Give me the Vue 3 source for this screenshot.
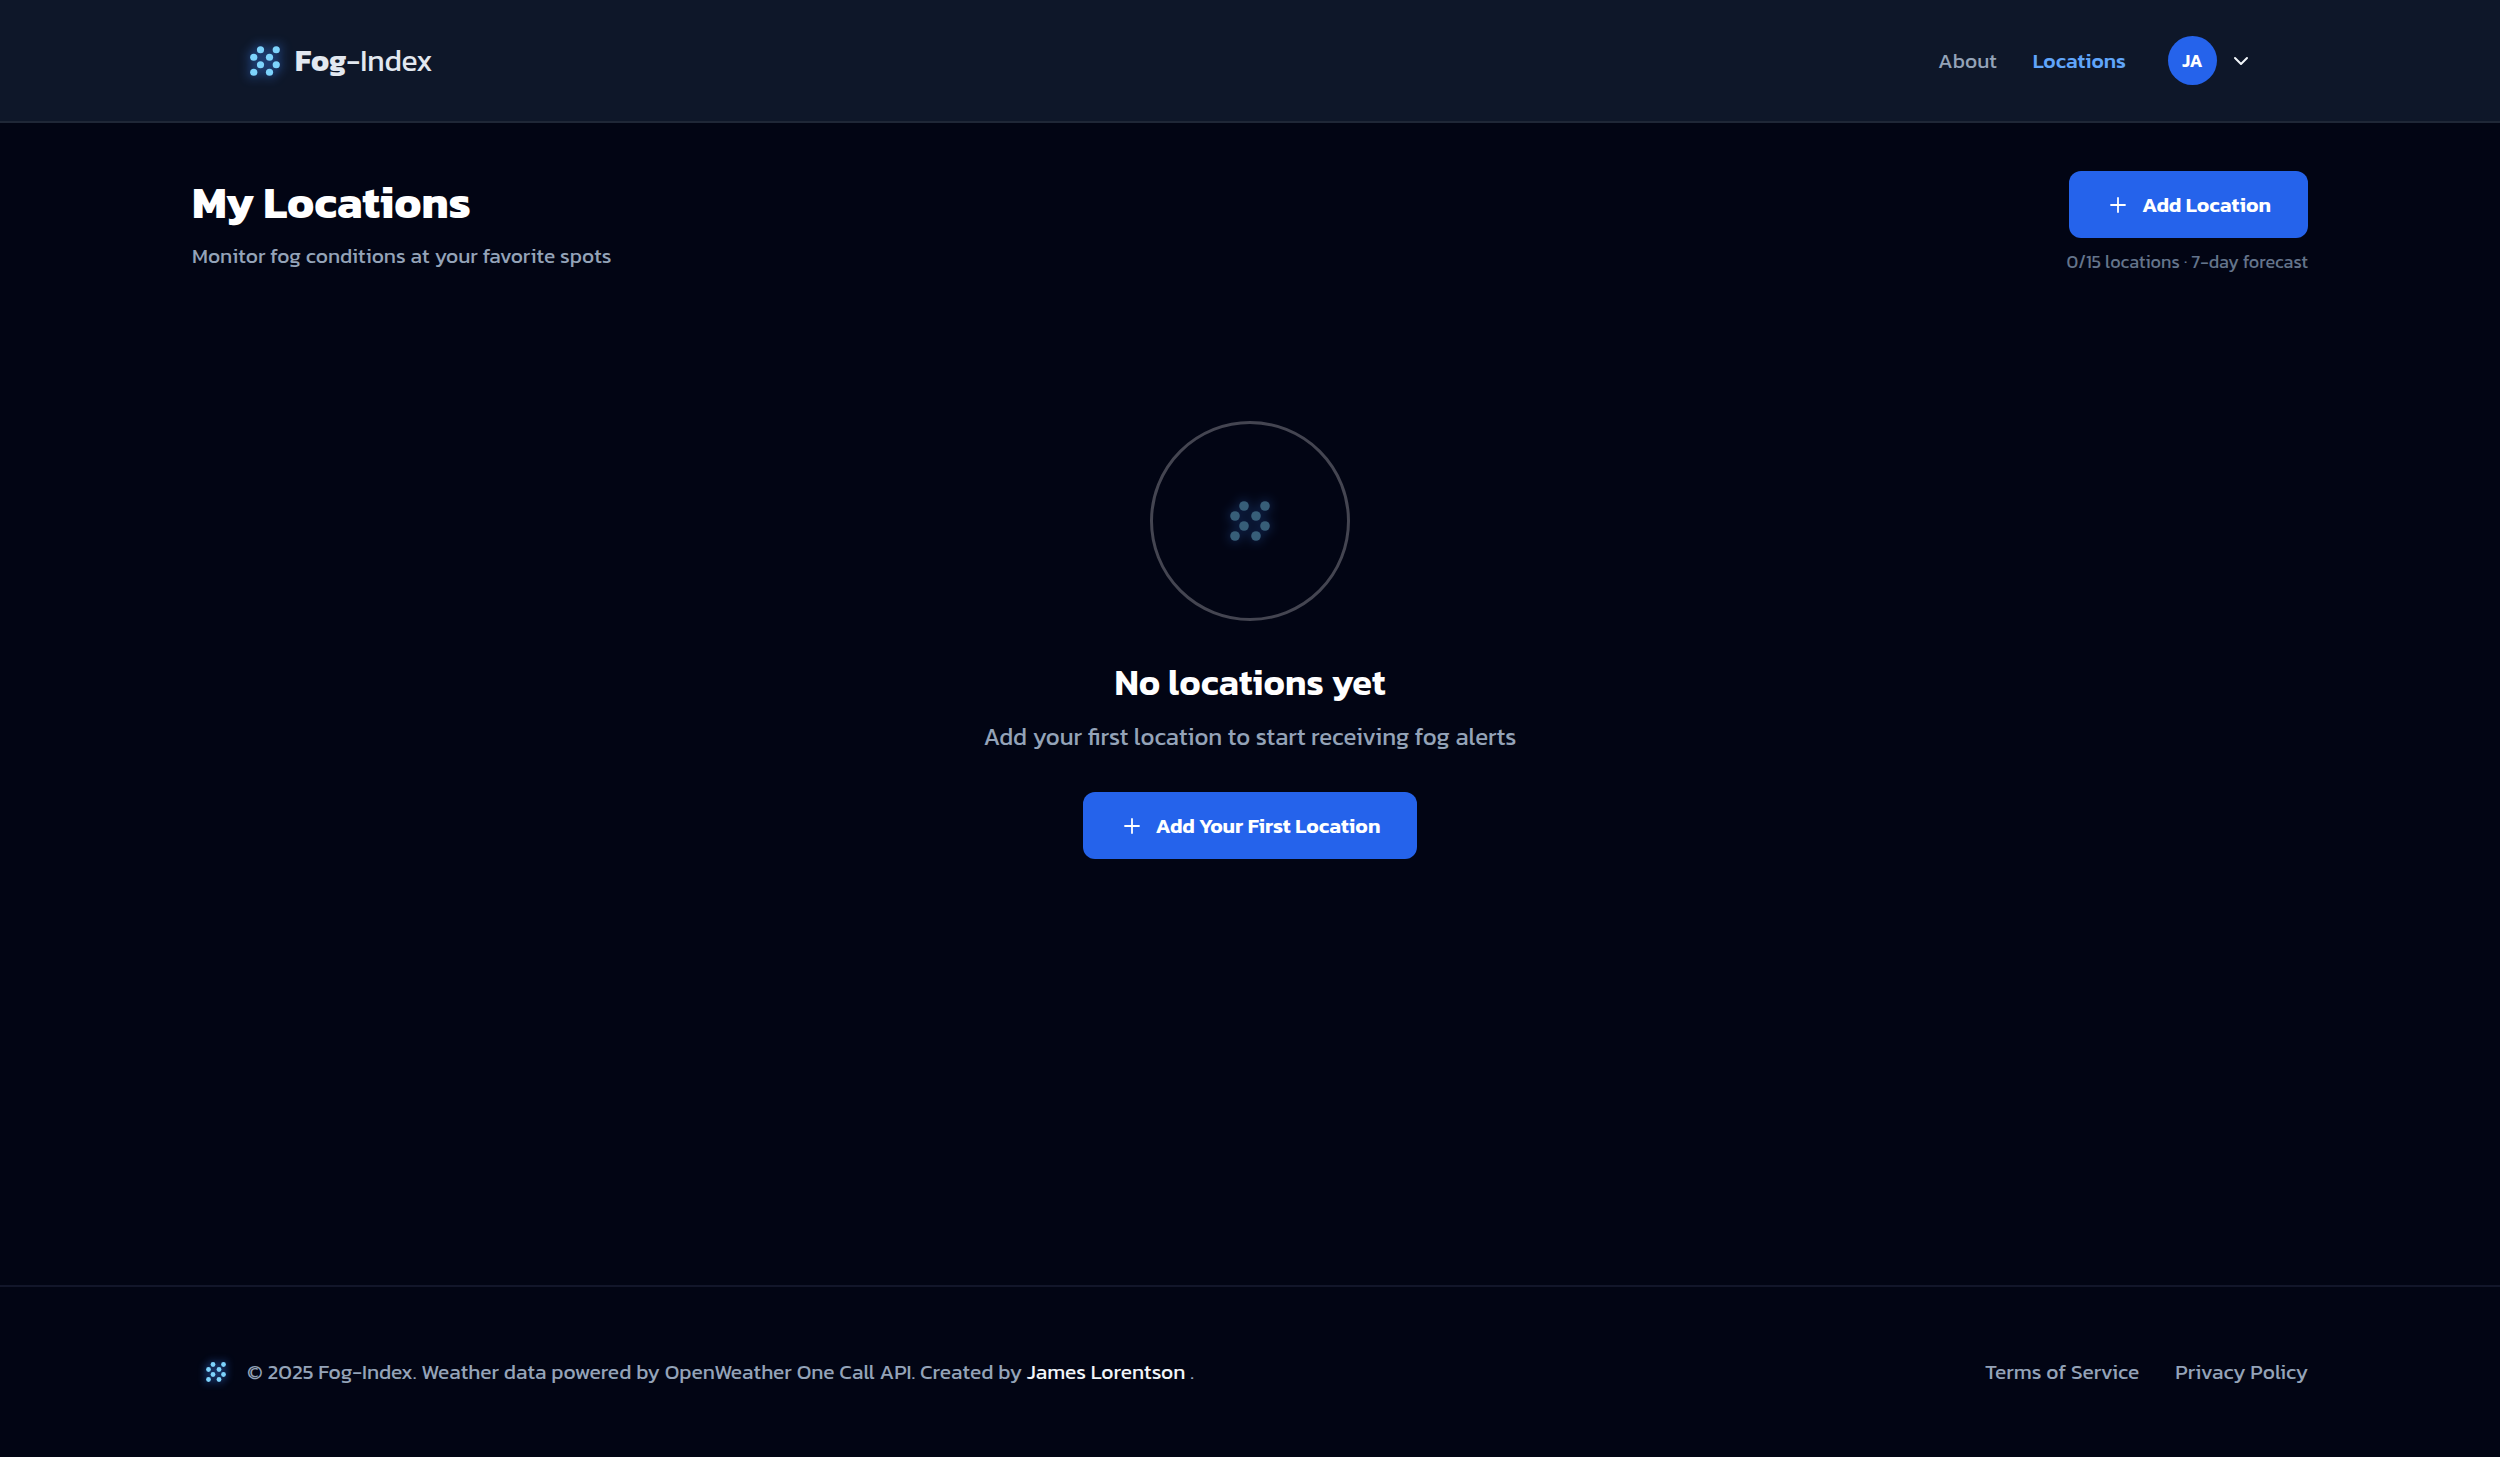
<script setup>
import { h } from 'vue'

const dots = [
  [18, 9], [39, 9],
  [9, 19], [30, 19],
  [18, 29], [39, 29],
  [9, 39], [30, 39]
]

const FogMark = (props) =>
  h('svg', { viewBox: '0 0 48 48', width: props.size, height: props.size, 'aria-hidden': 'true', overflow: 'visible' },
    dots.map(([cx, cy]) => h('circle', { cx, cy, r: 4.8, fill: '#7dd3fc' })))
FogMark.props = ['size']

const PlusIcon = () =>
  h('svg', { viewBox: '0 0 24 24', width: 24, height: 24, 'aria-hidden': 'true' },
    [h('path', { d: 'M12 5v14M5 12h14', stroke: 'currentColor', 'stroke-width': 1.8, 'stroke-linecap': 'round', fill: 'none' })])
</script>

<template>
  <div class="page">
    <header class="site-header">
      <div class="header-inner">
        <a class="brand" href="#">
          <FogMark class="mark" :size="36" />
          <span><b>Fog</b>-Index</span>
        </a>
        <nav class="nav">
          <a href="#">About</a>
          <a href="#" class="active" aria-current="page">Locations</a>
          <button class="account" type="button" aria-label="Account menu">
            <span class="avatar">JA</span>
            <svg viewBox="0 0 24 24" width="24" height="24" aria-hidden="true">
              <path d="M6 9l6 6 6-6" fill="none" stroke="#f1f5f9" stroke-width="2" stroke-linecap="round" stroke-linejoin="round" />
            </svg>
          </button>
        </nav>
      </div>
    </header>

    <main class="container">
      <div class="page-head">
        <div>
          <h1>My Locations</h1>
          <p class="subtitle">Monitor fog conditions at your favorite spots</p>
        </div>
        <div class="actions">
          <button class="primary" type="button"><PlusIcon />Add Location</button>
          <p class="quota">0/15 locations · 7-day forecast</p>
        </div>
      </div>

      <section class="empty">
        <div class="ring"><FogMark class="mark faded" :size="48" /></div>
        <h2>No locations yet</h2>
        <p>Add your first location to start receiving fog alerts</p>
        <button class="primary" type="button"><PlusIcon />Add Your First Location</button>
      </section>
    </main>

    <footer class="site-footer">
      <div class="container footer-inner">
        <div class="credit">
          <FogMark class="mark small" :size="24" />
          <p>© 2025 Fog-Index. Weather data powered by OpenWeather One Call API. Created by <a href="#">James Lorentson</a> .</p>
        </div>
        <nav class="legal">
          <a href="#">Terms of Service</a>
          <a href="#">Privacy Policy</a>
        </nav>
      </div>
    </footer>
  </div>
</template>

<style>
body {
  background: #020514;
}
</style>

<style scoped>
.page {
  min-height: 100vh;
  display: flex;
  flex-direction: column;
  background: #020514;
  color: #94a3b8;
  font: 400 21px/30px "Kanit", "Noto Sans", sans-serif;
}
h1, h2, p {
  margin: 0;
}
a {
  color: inherit;
  text-decoration: none;
}
button {
  border: 0;
  font: inherit;
  cursor: pointer;
}
svg {
  display: block;
  flex: none;
}
.container {
  box-sizing: border-box;
  width: 100%;
  max-width: 2164px;
  margin: 0 auto;
  padding: 0 24px;
}
.mark {
  filter: drop-shadow(0 0 6px #3b82f6);
}
.mark.faded {
  opacity: 0.43;
}
.mark.small {
  filter: drop-shadow(0 0 4px #3b82f6);
}

.site-header {
  background: #0e1729;
  border-bottom: 2px solid #1f2737;
}
.header-inner {
  box-sizing: border-box;
  max-width: 2054px;
  margin: 0 auto;
  padding: 36px 24px;
  display: flex;
  align-items: center;
  justify-content: space-between;
}
.brand {
  display: flex;
  align-items: center;
  gap: 12px;
  color: #e2e8f0;
  font-size: 30px;
  line-height: 48px;
}
.nav {
  display: flex;
  align-items: center;
  gap: 36px;
}
.nav .active {
  color: #60a5fa;
  font-weight: 500;
}
.account {
  display: flex;
  align-items: center;
  gap: 12px;
  margin-left: 6px;
  padding: 0;
  background: none;
}
.avatar {
  width: 49px;
  height: 49px;
  border-radius: 50%;
  display: grid;
  place-items: center;
  background: #2563eb;
  color: #fff;
  font-size: 18px;
  font-weight: 600;
}

main {
  flex: 1;
}
main.container {
  padding-top: 48px;
}
.page-head {
  display: flex;
  justify-content: space-between;
  align-items: flex-start;
}
h1 {
  color: #fff;
  font-size: 45px;
  line-height: 62px;
  font-weight: 700;
}
.subtitle {
  margin-top: 8px;
}
.actions {
  display: flex;
  flex-direction: column;
  align-items: flex-end;
}
.primary {
  display: flex;
  align-items: center;
  gap: 12px;
  height: 67px;
  padding: 0 37px;
  border-radius: 12px;
  background: #2563eb;
  color: #fff;
  font-weight: 600;
}
.quota {
  margin-top: 12px;
  color: #64748b;
  font-size: 18px;
  line-height: 24px;
}

.empty {
  padding: 147px 0 48px;
  display: flex;
  flex-direction: column;
  align-items: center;
  text-align: center;
}
.ring {
  box-sizing: border-box;
  width: 200px;
  height: 200px;
  border: 3px solid #444551;
  border-radius: 50%;
  display: grid;
  place-items: center;
}
h2 {
  margin-top: 36px;
  color: #fff;
  font-size: 36px;
  line-height: 50px;
  font-weight: 600;
}
.empty p {
  margin: 11px 0 36px;
  font-size: 24px;
  line-height: 38px;
}

.site-footer {
  border-top: 2px solid #12162a;
}
.footer-inner {
  padding-top: 70px;
  padding-bottom: 70px;
  display: flex;
  align-items: center;
  justify-content: space-between;
}
.credit {
  display: flex;
  align-items: center;
  gap: 19px;
  padding-left: 12px;
}
.credit a {
  color: #f1f5f9;
}
.legal {
  display: flex;
  gap: 36px;
}
</style>
